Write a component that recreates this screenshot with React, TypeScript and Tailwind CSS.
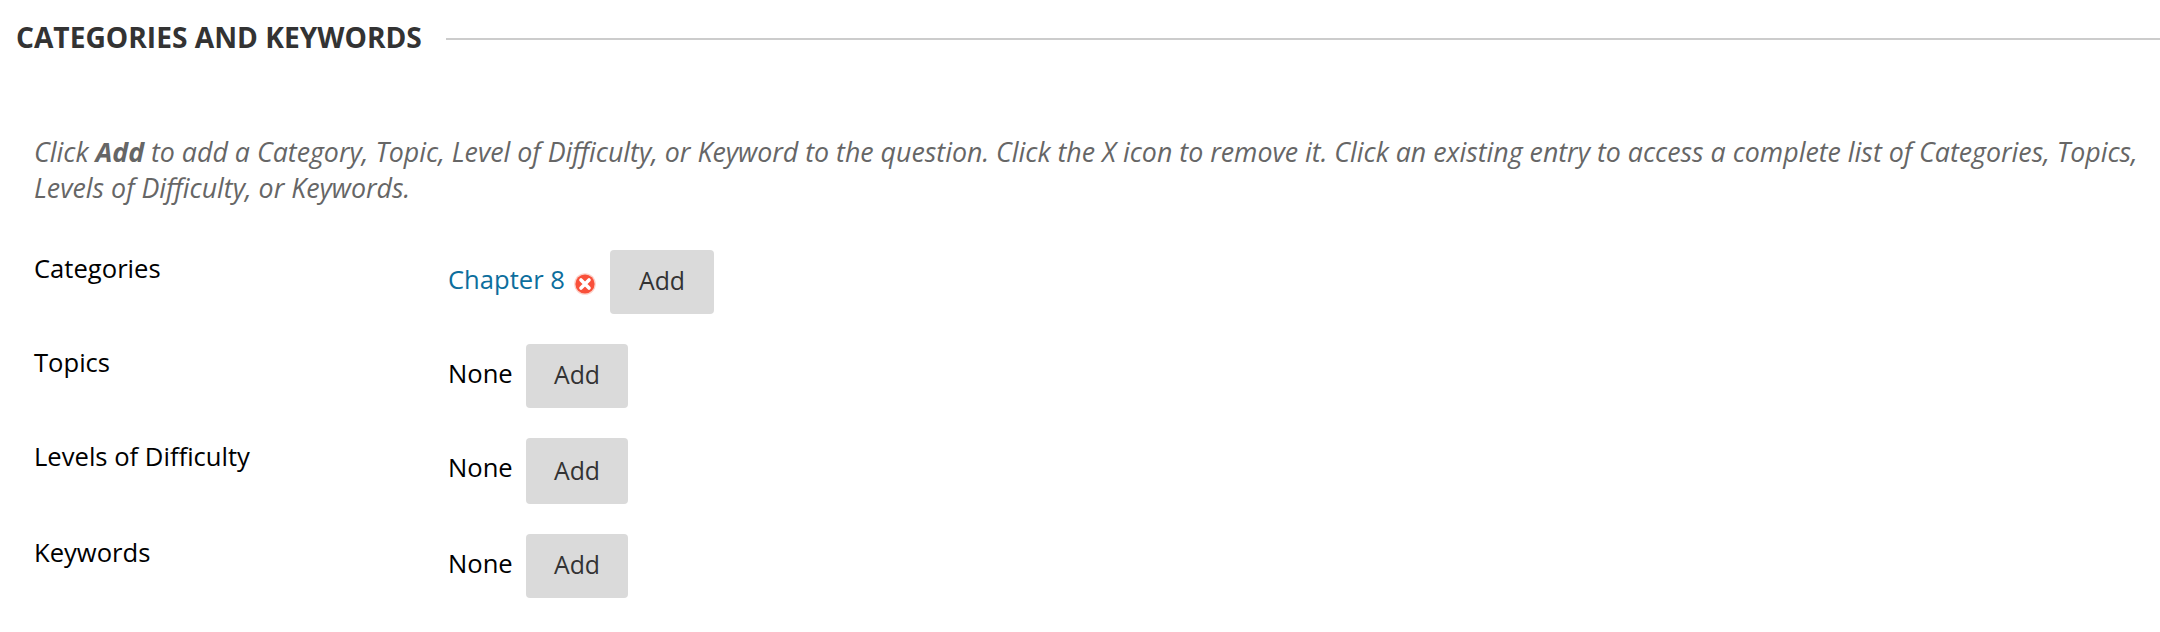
const rows = [
  { label: 'Categories', value: 'Chapter 8', row: 'h-[94px]', button: 'h-16 w-[104px] pt-3 pl-[29px]' },
  { label: 'Topics', value: 'None', row: 'h-[94px]', button: 'h-16 w-[102px] pt-3 pl-7' },
  { label: 'Levels of Difficulty', value: 'None', row: 'h-24', button: 'h-[66px] w-[102px] pt-3.5 pl-7' },
  { label: 'Keywords', value: 'None', row: 'h-16', button: 'h-16 w-[102px] pt-3 pl-7' },
];

function RemoveIcon() {
  return (
    <svg className="mt-[23px] ml-[9px] h-[22px] w-[22px]" viewBox="0 0 22 22" aria-hidden="true">
      <circle cx="11" cy="11" r="10.8" fill="#fcd0c8" />
      <circle cx="11" cy="11" r="9.6" fill="#f9503a" />
      <path d="M7 7l8 8M15 7l-8 8" stroke="#fff" strokeWidth="3.6" strokeLinecap="round" />
    </svg>
  );
}

export default function App() {
  return (
    <main className="h-[632px] w-[2160px] overflow-hidden bg-white font-['Open_Sans','Noto_Sans',sans-serif] text-[25.6px] leading-9 text-black">
      <header className="flex items-start pt-[19px] pl-4">
        <h2 className="w-[430px] text-[28.16px] leading-9 font-bold whitespace-nowrap text-[#333333]">CATEGORIES AND KEYWORDS</h2>
        <div className="mt-[19px] h-0.5 flex-1 bg-[#cccccc]" />
      </header>
      <p className="mt-[79px] ml-[34px] text-[26.78px] leading-9 whitespace-nowrap text-[#666666] italic">
        Click <strong>Add</strong> to add a Category, Topic, Level of Difficulty, or Keyword to the question. Click the X icon to remove it. Click an existing entry to access a complete list of Categories, Topics,
        <br />
        Levels of Difficulty, or Keywords.
      </p>
      <div className="mt-11 ml-[34px]">
        {rows.map(({ label, value, row, button }) => (
          <div key={label} className={`flex items-start ${row}`}>
            <div className="mt-px w-[414px]">{label}</div>
            <div className={value === 'None' ? 'flex w-[78px] items-start' : 'flex w-[162px] items-start'}>
              <span className={value === 'None' ? 'mt-3' : 'mt-3 text-[#0c6e9d]'}>{value}</span>
              {value !== 'None' && <RemoveIcon />}
            </div>
            <button className={`flex items-start rounded-[4px] bg-[#dadada] text-[24.8px] leading-9 text-[#333333] ${button}`}>Add</button>
          </div>
        ))}
      </div>
    </main>
  );
}
